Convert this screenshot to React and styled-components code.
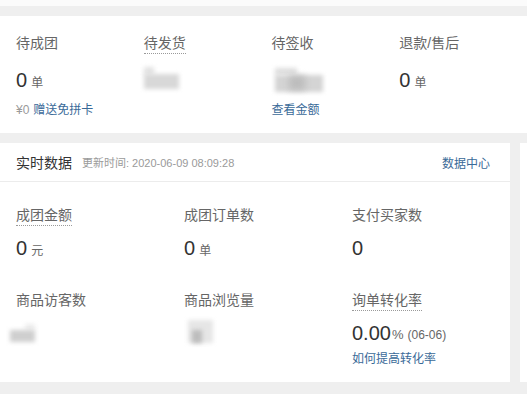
import React from "react";
import styled, { createGlobalStyle } from "styled-components";

const GlobalStyle = createGlobalStyle`
  body {
    margin: 0;
    background: #efefef;
    font-family: "Liberation Sans", "Noto Sans CJK SC", sans-serif;
  }
`;

const Page = styled.div`
  display: flex;
  flex-direction: column;
  gap: 10px;
  height: 394px;
  overflow: hidden;
`;

const TopStrip = styled.div`
  height: 6px;
  background: #fbfbfb;
`;

const Card = styled.div`
  background: #fff;
`;

const StatusCard = styled(Card)`
  display: grid;
  grid-template-columns: repeat(4, 1fr);
  padding: 17px 0 14px 16px;
`;

const Row = styled.div`
  display: flex;
  gap: 10px;
`;

const DataCard = styled(Card)`
  width: 510px;
  flex: none;
`;

const SideCard = styled(Card)`
  flex: 1;
`;

const Header = styled.div`
  height: 38px;
  border-bottom: 1px solid #ececec;
  display: flex;
  align-items: center;
  padding: 0 20px 0 16px;
`;

const Title = styled.span`
  font-size: 14px;
  color: #333;
`;

const Updated = styled.span`
  font-size: 11px;
  color: #9a9a9a;
  margin-left: 10px;
`;

const Link = styled.a`
  font-size: 12px;
  color: #3a6a98;
  text-decoration: none;
  margin-left: ${(p) => (p.$push ? "auto" : "0")};
`;

const Grid = styled.div`
  display: grid;
  grid-template-columns: repeat(3, 168px);
  row-gap: 28px;
  padding: 23px 0 14px 16px;
`;

const Item = styled.div`
  display: flex;
  flex-direction: column;
  align-items: flex-start;
`;

const Label = styled.span`
  font-size: 14px;
  line-height: 20px;
  color: #666;
  border-bottom: 1px ${(p) => (p.$dotted ? "dotted #9a9a9a" : "solid transparent")};
`;

const Value = styled.div`
  margin-top: ${(p) => p.$gap}px;
  height: 28px;
  display: flex;
  align-items: center;
  font-size: 20px;
  color: #333;
`;

const Unit = styled.span`
  font-size: ${(p) => p.$size || 12}px;
  color: #666;
  margin-left: ${(p) => p.$left ?? 4}px;
  padding-top: 3px;
`;

const Sub = styled.div`
  margin-top: ${(p) => p.$gap || 0}px;
  line-height: 18px;
  font-size: 12px;
  color: #9a9a9a;
  display: flex;
  gap: 4px;
`;

const Smudge = styled.div`
  position: relative;
  width: 60px;
  height: 28px;
`;

const Blob = styled.div`
  position: absolute;
  left: ${(p) => p.$x}px;
  top: ${(p) => p.$y}px;
  width: ${(p) => p.$w}px;
  height: ${(p) => p.$h}px;
  background: ${(p) => p.$c};
  filter: blur(${(p) => p.$blur || 2}px);
`;

const Blur = ({ blobs, offset = 0 }) => (
  <Smudge style={{ marginLeft: offset }}>
    {blobs.map((b, i) => (
      <Blob key={i} $x={b[0]} $y={b[1]} $w={b[2]} $h={b[3]} $c={b[4]} $blur={b[5]} />
    ))}
  </Smudge>
);

export default function App() {
  return (
    <>
      <GlobalStyle />
      <Page>
        <TopStrip />
        <StatusCard>
          <Item>
            <Label>待成团</Label>
            <Value $gap={12}>0<Unit>单</Unit></Value>
            <Sub $gap={7}>¥0<Link>赠送免拼卡</Link></Sub>
          </Item>
          <Item>
            <Label $dotted>待发货</Label>
            <Value $gap={12}>
              <Blur
                blobs={[
                  [0, 1, 10, 8, "#e2e2e2"],
                  [0, 8, 35, 15, "#d8d8d8"],
                ]}
              />
            </Value>
          </Item>
          <Item>
            <Label>待签收</Label>
            <Value $gap={12}>
              <Blur
                offset={3}
                blobs={[
                  [0, 2, 22, 7, "#dedede"],
                  [0, 9, 48, 17, "#d4d4d4"],
                  [14, 10, 16, 14, "#bdbdbd", 3],
                ]}
              />
            </Value>
            <Sub $gap={7}><Link>查看金额</Link></Sub>
          </Item>
          <Item>
            <Label>退款/售后</Label>
            <Value $gap={12}>0<Unit>单</Unit></Value>
          </Item>
        </StatusCard>
        <Row>
          <DataCard>
            <Header>
              <Title>实时数据</Title>
              <Updated>更新时间: 2020-06-09 08:09:28</Updated>
              <Link $push>数据中心</Link>
            </Header>
            <Grid>
              <Item>
                <Label $dotted>成团金额</Label>
                <Value $gap={8}>0<Unit>元</Unit></Value>
              </Item>
              <Item>
                <Label>成团订单数</Label>
                <Value $gap={8}>0<Unit>单</Unit></Value>
              </Item>
              <Item>
                <Label>支付买家数</Label>
                <Value $gap={8}>0</Value>
              </Item>
              <Item>
                <Label>商品访客数</Label>
                <Value $gap={8}>
                  <Blur
                    offset={-6}
                    blobs={[
                      [15, 5, 10, 6, "#ececec"],
                      [0, 11, 25, 12, "#cfcfcf"],
                    ]}
                  />
                </Value>
              </Item>
              <Item>
                <Label>商品浏览量</Label>
                <Value $gap={8}>
                  <Blur
                    offset={4}
                    blobs={[
                      [0, 1, 25, 23, "#e6e6e6"],
                      [4, 11, 10, 13, "#bcbcbc"],
                    ]}
                  />
                </Value>
              </Item>
              <Item>
                <Label $dotted>询单转化率</Label>
                <Value $gap={8}>
                  0.00<Unit $size={13} $left={1}>%</Unit>
                  <Unit>(06-06)</Unit>
                </Value>
                <Sub $gap={3}><Link>如何提高转化率</Link></Sub>
              </Item>
            </Grid>
          </DataCard>
          <SideCard />
        </Row>
      </Page>
    </>
  );
}
